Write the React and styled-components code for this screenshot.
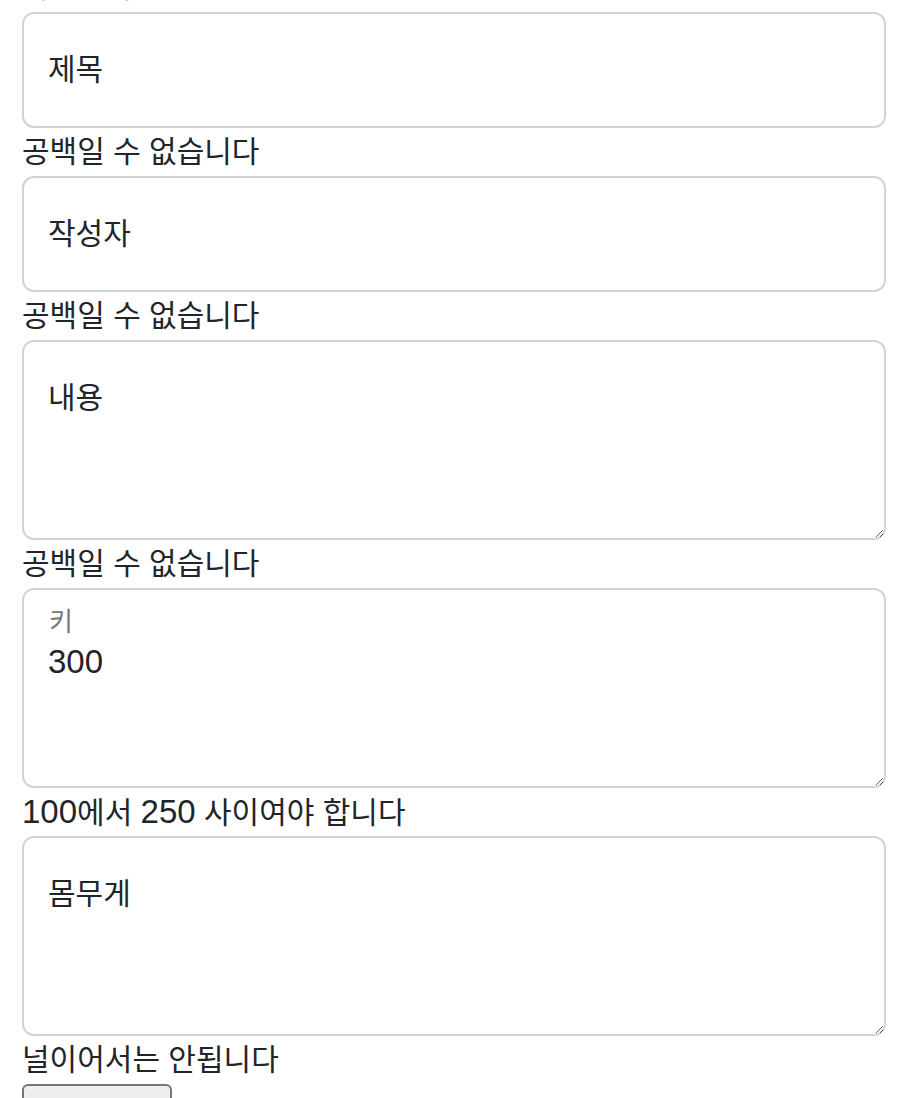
import React from 'react';
import styled, { createGlobalStyle } from 'styled-components';

const GlobalStyle = createGlobalStyle`
  html, body {
    margin: 0;
    padding: 0;
    background: #fff;
    overflow: hidden;
  }
  body {
    font-family: "Liberation Sans", "Noto Sans CJK KR", sans-serif;
    color: #212529;
  }
`;

const Page = styled.form`
  padding: 0 16px 0 22px;
  font-size: 30px;
  line-height: 48px;
`;

const Heading = styled.div`
  margin-top: -37px;
  height: 49px;
`;

const Field = styled.div`
  position: relative;
`;

const TextInput = styled.input`
  display: block;
  box-sizing: border-box;
  width: 100%;
  height: 116px;
  margin: 0;
  padding: 32px 24px;
  font: inherit;
  color: #212529;
  background: #fff;
  border: 2px solid #ced4da;
  border-radius: 12px;
  outline: none;

  &::placeholder {
    color: #212529;
    opacity: 1;
  }
`;

const TextArea = styled.textarea`
  display: block;
  box-sizing: border-box;
  width: 100%;
  height: 200px;
  margin: 0;
  padding: ${(p) => (p.$floated ? '48px 24px 16px' : '32px 24px')};
  font-family: inherit;
  font-size: ${(p) => (p.$floated ? '33px' : '30px')};
  line-height: 48px;
  color: #212529;
  background: #fff;
  border: 2px solid #ced4da;
  border-radius: 12px;
  outline: none;
  resize: vertical;

  &::placeholder {
    color: #212529;
    opacity: 1;
  }
`;

const FloatLabel = styled.label`
  position: absolute;
  top: 14px;
  left: 27px;
  font-size: 26px;
  line-height: 40px;
  color: rgba(33, 37, 41, 0.65);
  pointer-events: none;
`;

const ErrorText = styled.div`
  height: 48px;
  white-space: nowrap;
`;

const Num = styled.span`
  font-size: 33px;
`;

const SubmitButton = styled.button`
  display: block;
  box-sizing: border-box;
  width: 150px;
  height: 60px;
  margin: 0;
  padding: 20px 24px 0;
  font-family: inherit;
  font-size: 26px;
  line-height: 30px;
  background: #efefef;
  border: 2px solid #767676;
  border-radius: 6px;
  color: #000;
`;

const fields = [
  { kind: 'input', label: '제목', error: '공백일 수 없습니다' },
  { kind: 'input', label: '작성자', error: '공백일 수 없습니다' },
  { kind: 'area', label: '내용', error: '공백일 수 없습니다' },
  {
    kind: 'area',
    label: '키',
    value: '300',
    error: (
      <>
        <Num>100</Num>에서 <Num>250</Num> 사이여야 합니다
      </>
    ),
  },
  { kind: 'area', label: '몸무게', error: '널이어서는 안됩니다' },
];

const App = () => (
  <>
    <GlobalStyle />
    <Page onSubmit={(e) => e.preventDefault()}>
      <Heading>작성글 수정</Heading>
      {fields.map((f) => (
        <React.Fragment key={f.label}>
          <Field>
            {f.kind === 'input' ? (
              <TextInput placeholder={f.label} />
            ) : f.value ? (
              <>
                <TextArea $floated defaultValue={f.value} />
                <FloatLabel>{f.label}</FloatLabel>
              </>
            ) : (
              <TextArea placeholder={f.label} />
            )}
          </Field>
          <ErrorText>{f.error}</ErrorText>
        </React.Fragment>
      ))}
      <SubmitButton type="submit">저장</SubmitButton>
    </Page>
  </>
);

export default App;
